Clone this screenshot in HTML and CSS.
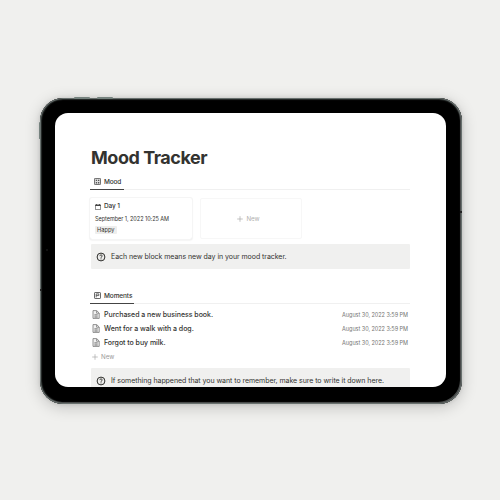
FILE: index.html
```
<!DOCTYPE html>
<html lang="en">
<head>
<meta charset="utf-8">
<title>Mood Tracker</title>
<link rel="stylesheet" href="styles.css">
</head>
<body>
<svg class="defs" width="0" height="0">
  <symbol id="page" viewBox="0 0 8 9"><path d="M1 .6h3.7L7.2 3v5.4H1zM4.6.8v2.4h2.4M2.4 4.7h3.3M2.4 6h3.3M2.4 7.2h3.3" fill="#f1f1f1" stroke="#777" stroke-width=".8"/></symbol>
  <symbol id="help" viewBox="0 0 10 10"><circle cx="5" cy="5" r="3.9" fill="none" stroke="#2b2b28" stroke-width="1"/><path d="M3.8 4.1C3.9 2.5 6.3 2.6 6.2 4c0 .8-1.2.9-1.2 1.8M5 6.4v1" fill="none" stroke="#2b2b28" stroke-width=".9"/></symbol>
  <symbol id="plus" viewBox="0 0 6 6"><path d="M3 .2v5.6M.2 3h5.6" fill="none" stroke="#aaa" stroke-width=".7"/></symbol>
</svg>
<div class="device">
  <i class="key key-a"></i><i class="key key-b"></i><i class="key key-side"></i><i class="seam seam-left"></i><i class="seam seam-right"></i><i class="camera"></i>
  <main class="screen">
    <h1>Mood Tracker</h1>
    <nav class="tabs">
      <div class="tab tab-mood">
        <svg width="7" height="7" viewBox="0 0 7 7"><rect x=".4" y=".4" width="6.2" height="6.2" rx=".8" fill="#ddd" stroke="#444" stroke-width=".8"/><path d="M1.8 1.7h1.3v1.4H1.8zM4 1.7h1.3v1.4H4zM1.8 4h1.3v1.4H1.8zM4 4h1.3v1.4H4z" fill="#555"/></svg>
        <span>Mood</span>
      </div>
    </nav>
    <section class="gallery">
      <article class="card">
        <h2><svg width="6" height="6" viewBox="0 0 6 6"><path d="M.4 1h5.2v4.6H.4z" fill="none" stroke="#555" stroke-width=".7"/><path d="M.2.7h5.6v1.4H.2zM1 0h.8v1H1zM4.2 0H5v1h-.8z" fill="#444"/></svg>Day 1</h2>
        <p class="stamp">September 1, 2022 10:25 AM</p>
        <span class="tag">Happy</span>
      </article>
      <div class="add-card"><svg width="6" height="6"><use href="#plus"/></svg>New</div>
    </section>
    <aside class="callout"><svg width="10" height="10"><use href="#help"/></svg><span>Each new block means new day in your mood tracker.</span></aside>
    <nav class="tabs tabs-list">
      <div class="tab tab-moments">
        <svg width="7" height="7" viewBox="0 0 7 7"><rect x=".5" y=".5" width="6" height="6" rx=".6" fill="none" stroke="#444" stroke-width=".8"/><path d="M2.2 5.4V1.9h2.6v1.7H2.2" fill="none" stroke="#444" stroke-width=".8"/></svg>
        <span>Moments</span>
      </div>
    </nav>
    <ul class="list">
      <li><svg width="8" height="9"><use href="#page"/></svg><span>Purchased a new business book.</span><time>August 30, 2022 3:59 PM</time></li>
      <li><svg width="8" height="9"><use href="#page"/></svg><span>Went for a walk with a dog.</span><time>August 30, 2022 3:59 PM</time></li>
      <li><svg width="8" height="9"><use href="#page"/></svg><span>Forgot to buy milk.</span><time>August 30, 2022 3:59 PM</time></li>
    </ul>
    <div class="add-row"><svg width="6" height="6"><use href="#plus"/></svg>New</div>
    <aside class="callout"><svg width="10" height="10"><use href="#help"/></svg><span>If something happened that you want to remember, make sure to write it down here.</span></aside>
  </main>
</div>
</body>
</html>
```
FILE: styles.css
```
* { box-sizing: border-box; }
body {
  margin: 0;
  height: 500px;
  padding: 98px 38px 0 40px;
  overflow: hidden;
  background: #f0f0ee;
  color: #333330;
  font-family: Inter, "Liberation Sans", sans-serif;
}
.defs { position: absolute; }
h1, h2, p, ul { margin: 0; padding: 0; }
svg { flex: none; display: block; }
.device {
  position: relative;
  width: 422px;
  height: 306px;
  padding: 15px 16px 16px 15px;
  border-radius: 23px;
  background: #000;
  box-shadow: inset 0 0 0 1px #68706e, inset -1px -1px 0 1px #484a4a, inset 0 0 1px 2px #292d2c, 0 3px 16px rgba(0, 0, 0, .2), 0 0 4px rgba(0, 0, 0, .12);
}
.screen {
  width: 391px;
  height: 274px;
  padding: 33px 36px 0;
  border-radius: 13px;
  overflow: hidden;
  background: #fff;
}
.key, .seam, .camera { position: absolute; }
.key { top: -1px; width: 16px; height: 2px; border-radius: 1px; background: #75827e; }
.key-a { left: 34px; }
.key-b { left: 57px; }
.key-side { top: 24px; left: -1px; width: 1px; height: 17px; }
.seam { width: 2px; height: 2px; background: #222; }
.seam-left { left: 0; top: 191px; }
.seam-right { right: 0; top: 113px; }
.camera { left: 6px; top: 151px; width: 2px; height: 2px; border-radius: 50%; background: #171717; }
h1 {
  height: 23px;
  font-size: 18px;
  line-height: 23px;
  font-weight: 700;
  letter-spacing: -.46px;
  white-space: nowrap;
}
.tabs { display: flex; height: 21px; border-bottom: 1px solid #f0f0f0; }
.tab {
  display: flex;
  align-items: center;
  gap: 3px;
  height: 21px;
  margin-left: -1px;
  padding: 8px 0 3px 4px;
  border-bottom: 1px solid #444;
  font-size: 6.5px;
  line-height: 8px;
  font-weight: 500;
}
.tab-mood { width: 34px; letter-spacing: -.15px; }
.tab-moments { width: 44px; letter-spacing: -.1px; }
.gallery { display: flex; gap: 8px; margin: 8px 0 0 -1px; }
.card, .add-card { width: 102px; height: 41px; border-radius: 2px; }
.card { padding: 4px 5px; box-shadow: 0 0 0 1px #f5f5f5, 0 1px 2px rgba(0, 0, 0, .14); }
.card h2 { display: flex; align-items: center; gap: 3px; height: 9px; font-size: 6.5px; line-height: 9px; font-weight: 500; letter-spacing: -.1px; }
.stamp { height: 9px; margin-top: 4px; font-size: 5.5px; line-height: 9px; letter-spacing: -.03px; white-space: nowrap; }
.tag { display: block; width: 22px; height: 8px; margin-top: 2px; padding: 0 2px; border-radius: 1px; background: #eeeeed; font-size: 5.7px; line-height: 8px; }
.add-card { display: flex; align-items: center; justify-content: center; gap: 3px; border: 1px solid #f7f7f7; padding-right: 5px; color: #b0b0ae; font-size: 6.2px; }
.callout {
  display: flex;
  align-items: center;
  gap: 5px;
  height: 25px;
  margin-top: 5px;
  padding-left: 5px;
  border-radius: 1px;
  background: #f0f0ef;
  font-size: 7px;
  line-height: 10px;
  letter-spacing: -.05px;
  white-space: nowrap;
}
.tabs-list { margin-top: 14px; }
.list { padding-top: 3px; list-style: none; }
.list li { display: flex; align-items: center; height: 14px; padding: 0 2px 0 1px; font-size: 7px; font-weight: 500; letter-spacing: -.03px; white-space: nowrap; }
.list li span { margin-left: 4px; }
.list time { margin-left: auto; padding-top: 1px; color: #747472; font-size: 5.5px; font-weight: 400; letter-spacing: -.03px; }
.add-row { display: flex; align-items: center; gap: 3px; height: 14px; padding: 1px 0 0 1px; color: #999; font-size: 6.2px; }
```
